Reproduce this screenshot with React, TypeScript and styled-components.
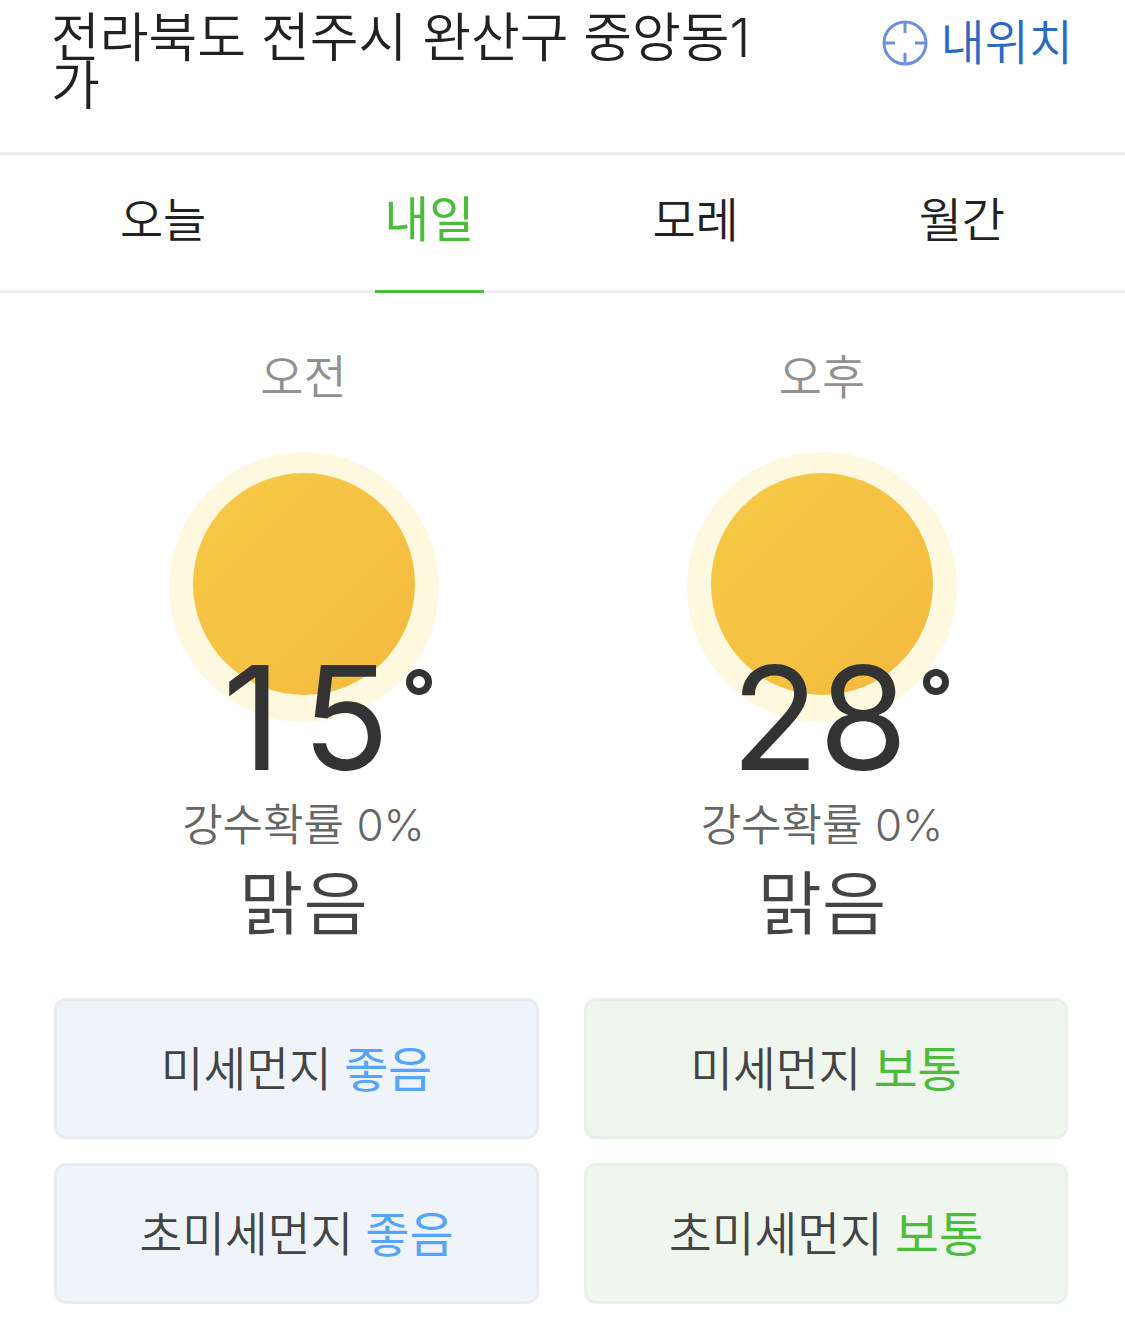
import styled, { createGlobalStyle } from "styled-components";

const GlobalStyle = createGlobalStyle`
    html, body {
        margin: 0;
        padding: 0;
        background: #fff;
        font-family: Inter, "Noto Sans CJK KR", sans-serif;
    }
    * {
        box-sizing: border-box;
    }
`;

const Page = styled.div`
    width: 1125px;
    height: 1334px;
    overflow: hidden;
    background: #fff;
`;

const Header = styled.header`
    height: 155px;
    display: flex;
    justify-content: space-between;
    padding: 14px 53px 0 51px;
    border-bottom: 3px solid #eeeeee;
`;

const Title = styled.h1`
    width: 716px;
    margin: 0;
    font-size: 53px;
    line-height: 48px;
    font-weight: 350;
    color: #222;
    word-break: break-all;
`;

const LocationButton = styled.div`
    display: flex;
    align-items: flex-start;
    gap: 13px;
    padding-top: 4px;
    font-size: 48px;
    line-height: 50px;
    font-weight: 350;
    color: #2a69c4;
    margin-right: -1px;
`;

const LocationIcon = styled.svg`
    width: 46px;
    height: 46px;
    margin-top: 2px;
`;

const Tabs = styled.nav`
    height: 138px;
    display: flex;
    padding: 0 30px;
    border-bottom: 3px solid #eeeeee;
`;

const Tab = styled.div<{ $active?: boolean }>`
    flex: 1;
    display: flex;
    justify-content: center;
    position: relative;
    padding-top: 33px;
    font-size: ${p => (p.$active ? 49 : 47)}px;
    line-height: 64px;
    font-weight: ${p => (p.$active ? 400 : 350)};
    color: ${p => (p.$active ? "#4cbc3c" : "#222")};

    ${p => p.$active && `
        &::after {
            content: "";
            position: absolute;
            left: 79px;
            bottom: -3px;
            width: 109px;
            height: 3px;
            background: #4cbc3c;
        }
    `}
`;

const Columns = styled.section`
    display: grid;
    grid-template-columns: 519px 518px;
    padding: 0 44px 0 44px;
`;

const Forecast = styled.div`
    display: flex;
    flex-direction: column;
    align-items: center;
    padding-top: 52px;
`;

const Period = styled.div`
    font-size: 47px;
    line-height: 64px;
    font-weight: 350;
    color: #919191;
`;

const Sun = styled.svg`
    width: 270px;
    height: 270px;
    margin-top: 43px;
    flex: none;
`;

const Temperature = styled.div<{ $width: number; $nudge: number }>`
    position: relative;
    width: ${p => p.$width}px;
    display: flex;
    justify-content: space-between;
    margin-top: -72px;
    margin-left: ${p => p.$nudge}px;
    font-size: 144px;
    line-height: 136px;
    font-weight: 400;
    color: #333;
`;

const Degree = styled.span`
    position: absolute;
    top: 19px;
    right: -42px;
    width: 26px;
    height: 26px;
    border: 7px solid #333;
    border-radius: 50%;
`;

const Chance = styled.div`
    margin-top: 7px;
    font-size: 44px;
    line-height: 64px;
    font-weight: 350;
    color: #666;
`;

const Condition = styled.div`
    margin-top: 3px;
    font-size: 70px;
    line-height: 90px;
    font-weight: 350;
    color: #444;
`;

const Cards = styled.section`
    display: grid;
    grid-template-columns: 485px 484px;
    column-gap: 45px;
    row-gap: 24px;
    padding: 0 57px 0 54px;
    margin-top: 48px;
`;

const Card = styled.div<{ $tone: "blue" | "green" }>`
    height: 141px;
    display: flex;
    align-items: center;
    justify-content: center;
    gap: 12px;
    padding-bottom: 6px;
    border-radius: 12px;
    font-size: 46.5px;
    font-weight: 350;
    color: #444;
    background: ${p => (p.$tone === "blue" ? "#eff4fb" : "#eff6ee")};
    border: 3px solid ${p => (p.$tone === "blue" ? "#e7ecf2" : "#e8f0e7")};
`;

const Grade = styled.span<{ $tone: "blue" | "green" }>`
    font-size: 48px;
    font-weight: 400;
    color: ${p => (p.$tone === "blue" ? "#56a3fb" : "#4cbc3c")};
`;

const SunIcon = ({ id }: { id: string }) => (
    <Sun viewBox="0 0 270 270">
        <defs>
            <linearGradient id={id} x1="0" y1="0" x2="1" y2="1">
                <stop offset="0" stopColor="#f7ca47" />
                <stop offset="1" stopColor="#f3ba3f" />
            </linearGradient>
        </defs>
        <circle cx="135" cy="135" r="135" fill="#fef8de" />
        <circle cx="135" cy="132" r="111" fill={`url(#${id})`} />
    </Sun>
);

const forecasts = [
    { id: "am", period: "오전", temp: "15", width: 167, nudge: 5 },
    { id: "pm", period: "오후", temp: "28", width: 176, nudge: -6 },
];

const dust = [
    { label: "미세먼지", grade: "좋음", tone: "blue" as const },
    { label: "미세먼지", grade: "보통", tone: "green" as const },
    { label: "초미세먼지", grade: "좋음", tone: "blue" as const },
    { label: "초미세먼지", grade: "보통", tone: "green" as const },
];

const App = () => {
    return <Page>
        <GlobalStyle />
        <Header>
            <Title>전라북도 전주시 완산구 중앙동1가</Title>
            <LocationButton>
                <LocationIcon viewBox="0 0 46 46" fill="none" stroke="#6d8fdf" strokeWidth="3">
                    <circle cx="23" cy="23" r="21" />
                    <path d="M23 2v11M23 33v11M2 23h11M33 23h11" />
                </LocationIcon>
                내위치
            </LocationButton>
        </Header>
        <Tabs>
            <Tab>오늘</Tab>
            <Tab $active>내일</Tab>
            <Tab>모레</Tab>
            <Tab>월간</Tab>
        </Tabs>
        <Columns>
            {forecasts.map(f => (
                <Forecast key={f.id}>
                    <Period>{f.period}</Period>
                    <SunIcon id={f.id} />
                    <Temperature $width={f.width} $nudge={f.nudge}>
                        {[...f.temp].map((digit, i) => <span key={i}>{digit}</span>)}
                        <Degree />
                    </Temperature>
                    <Chance>강수확률 0%</Chance>
                    <Condition>맑음</Condition>
                </Forecast>
            ))}
        </Columns>
        <Cards>
            {dust.map(d => (
                <Card key={d.label + d.tone} $tone={d.tone}>
                    {d.label}
                    <Grade $tone={d.tone}>{d.grade}</Grade>
                </Card>
            ))}
        </Cards>
    </Page>;
};

export default App;
